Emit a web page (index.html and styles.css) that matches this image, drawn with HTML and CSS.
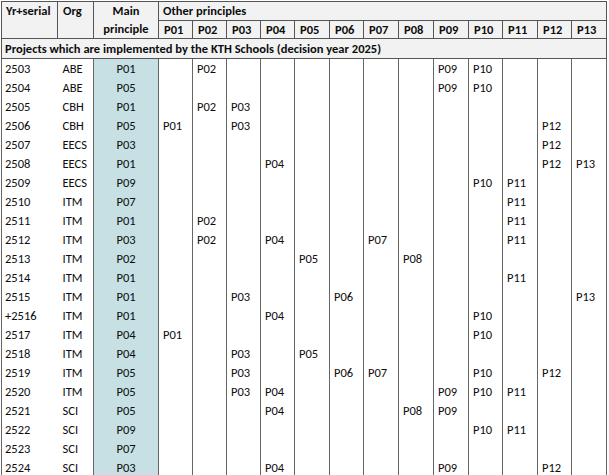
FILE: index.html
```html
<!DOCTYPE html>
<html lang="en">
<head>
<meta charset="utf-8">
<title>Projects by principle</title>
<link rel="stylesheet" href="styles.css">
</head>
<body>
<table class="grid">
<colgroup>
<col class="c-yr"><col class="c-org"><col class="c-main">
<col class="c34"><col class="c34"><col class="c34"><col class="c34"><col class="c35"><col class="c34"><col class="c35"><col class="c35"><col class="c35"><col class="c34"><col class="c35"><col class="c34"><col class="c35">
</colgroup>
<thead>
<tr class="h1">
<th rowspan="2" class="yr">Yr+serial</th>
<th rowspan="2" class="org">Org</th>
<th rowspan="2" class="main">Main<br>principle</th>
<th colspan="13" class="other">Other principles</th>
</tr>
<tr class="h2">
<th>P01</th><th>P02</th><th>P03</th><th>P04</th><th>P05</th><th>P06</th><th>P07</th><th>P08</th><th>P09</th><th>P10</th><th>P11</th><th>P12</th><th>P13</th>
</tr>
<tr class="sec">
<th colspan="16">Projects which are implemented by the KTH Schools (decision year 2025)</th>
</tr>
</thead>
<tbody>
<tr><td class="yr">2503</td><td class="org">ABE</td><td class="main">P01</td><td></td><td>P02</td><td></td><td></td><td></td><td></td><td></td><td></td><td>P09</td><td>P10</td><td></td><td></td><td></td></tr>
<tr><td class="yr">2504</td><td class="org">ABE</td><td class="main">P05</td><td></td><td></td><td></td><td></td><td></td><td></td><td></td><td></td><td>P09</td><td>P10</td><td></td><td></td><td></td></tr>
<tr><td class="yr">2505</td><td class="org">CBH</td><td class="main">P01</td><td></td><td>P02</td><td>P03</td><td></td><td></td><td></td><td></td><td></td><td></td><td></td><td></td><td></td><td></td></tr>
<tr><td class="yr">2506</td><td class="org">CBH</td><td class="main">P05</td><td>P01</td><td></td><td>P03</td><td></td><td></td><td></td><td></td><td></td><td></td><td></td><td></td><td>P12</td><td></td></tr>
<tr><td class="yr">2507</td><td class="org">EECS</td><td class="main">P03</td><td></td><td></td><td></td><td></td><td></td><td></td><td></td><td></td><td></td><td></td><td></td><td>P12</td><td></td></tr>
<tr><td class="yr">2508</td><td class="org">EECS</td><td class="main">P01</td><td></td><td></td><td></td><td>P04</td><td></td><td></td><td></td><td></td><td></td><td></td><td></td><td>P12</td><td>P13</td></tr>
<tr><td class="yr">2509</td><td class="org">EECS</td><td class="main">P09</td><td></td><td></td><td></td><td></td><td></td><td></td><td></td><td></td><td></td><td>P10</td><td>P11</td><td></td><td></td></tr>
<tr><td class="yr">2510</td><td class="org">ITM</td><td class="main">P07</td><td></td><td></td><td></td><td></td><td></td><td></td><td></td><td></td><td></td><td></td><td>P11</td><td></td><td></td></tr>
<tr><td class="yr">2511</td><td class="org">ITM</td><td class="main">P01</td><td></td><td>P02</td><td></td><td></td><td></td><td></td><td></td><td></td><td></td><td></td><td>P11</td><td></td><td></td></tr>
<tr><td class="yr">2512</td><td class="org">ITM</td><td class="main">P03</td><td></td><td>P02</td><td></td><td>P04</td><td></td><td></td><td>P07</td><td></td><td></td><td></td><td>P11</td><td></td><td></td></tr>
<tr><td class="yr">2513</td><td class="org">ITM</td><td class="main">P02</td><td></td><td></td><td></td><td></td><td>P05</td><td></td><td></td><td>P08</td><td></td><td></td><td></td><td></td><td></td></tr>
<tr><td class="yr">2514</td><td class="org">ITM</td><td class="main">P01</td><td></td><td></td><td></td><td></td><td></td><td></td><td></td><td></td><td></td><td></td><td>P11</td><td></td><td></td></tr>
<tr><td class="yr">2515</td><td class="org">ITM</td><td class="main">P01</td><td></td><td></td><td>P03</td><td></td><td></td><td>P06</td><td></td><td></td><td></td><td></td><td></td><td></td><td>P13</td></tr>
<tr><td class="yr">+2516</td><td class="org">ITM</td><td class="main">P01</td><td></td><td></td><td></td><td>P04</td><td></td><td></td><td></td><td></td><td></td><td>P10</td><td></td><td></td><td></td></tr>
<tr><td class="yr">2517</td><td class="org">ITM</td><td class="main">P04</td><td>P01</td><td></td><td></td><td></td><td></td><td></td><td></td><td></td><td></td><td>P10</td><td></td><td></td><td></td></tr>
<tr><td class="yr">2518</td><td class="org">ITM</td><td class="main">P04</td><td></td><td></td><td>P03</td><td></td><td>P05</td><td></td><td></td><td></td><td></td><td></td><td></td><td></td><td></td></tr>
<tr><td class="yr">2519</td><td class="org">ITM</td><td class="main">P05</td><td></td><td></td><td>P03</td><td></td><td></td><td>P06</td><td>P07</td><td></td><td></td><td>P10</td><td></td><td>P12</td><td></td></tr>
<tr><td class="yr">2520</td><td class="org">ITM</td><td class="main">P05</td><td></td><td></td><td>P03</td><td>P04</td><td></td><td></td><td></td><td></td><td>P09</td><td>P10</td><td>P11</td><td></td><td></td></tr>
<tr><td class="yr">2521</td><td class="org">SCI</td><td class="main">P05</td><td></td><td></td><td></td><td>P04</td><td></td><td></td><td></td><td>P08</td><td>P09</td><td></td><td></td><td></td><td></td></tr>
<tr><td class="yr">2522</td><td class="org">SCI</td><td class="main">P09</td><td></td><td></td><td></td><td></td><td></td><td></td><td></td><td></td><td></td><td>P10</td><td>P11</td><td></td><td></td></tr>
<tr><td class="yr">2523</td><td class="org">SCI</td><td class="main">P07</td><td></td><td></td><td></td><td></td><td></td><td></td><td></td><td></td><td></td><td></td><td></td><td></td><td></td></tr>
<tr class="last"><td class="yr">2524</td><td class="org">SCI</td><td class="main">P03</td><td></td><td></td><td></td><td>P04</td><td></td><td></td><td></td><td></td><td>P09</td><td></td><td></td><td>P12</td><td></td></tr>
</tbody>
</table>
</body>
</html>
```

FILE: styles.css
```css
html, body {
  margin: 0;
  background: #ffffff;
}

body {
  padding: 1px 0 0 1px;
  font-family: Carlito, Lato, "Liberation Sans", sans-serif;
  font-size: 12.5px;
  color: #0d0d0d;
}

.grid {
  border-collapse: collapse;
  table-layout: fixed;
  width: 605px;
}

.c-yr { width: 56px; }
.c-org { width: 36px; }
.c-main { width: 65px; }
.c34 { width: 34px; }
.c35 { width: 35px; }

.grid th,
.grid td {
  padding: 0 4px;
  text-align: left;
  white-space: nowrap;
  overflow: hidden;
}

.grid thead th {
  background: #f2f2f2;
  border: 1px solid #555555;
  font-weight: bold;
  height: 17px;
  line-height: 17px;
  vertical-align: top;
}

.grid thead th.main {
  text-align: center;
  line-height: 18px;
}

.grid thead th.org {
  padding-left: 5px;
}

.grid thead .h2 th {
  padding-left: 5px;
}

.grid thead .sec th {
  height: 18px;
  line-height: 19px;
  padding-left: 3px;
}

.grid tbody td {
  line-height: 14px;
  padding-top: 3px;
  padding-bottom: 2px;
  vertical-align: top;
  border-left: 1px solid #666666;
  border-right: 1px solid #666666;
}

.grid tbody td.yr {
  border-right: none;
  padding-left: 3px;
}

.grid tbody td.org {
  border-left: none;
  padding-left: 5px;
}

.grid tbody td.main {
  background: #c6e0e3;
  text-align: center;
}

.grid tbody tr.last td {
  border-bottom: 1px solid #555555;
}
```
